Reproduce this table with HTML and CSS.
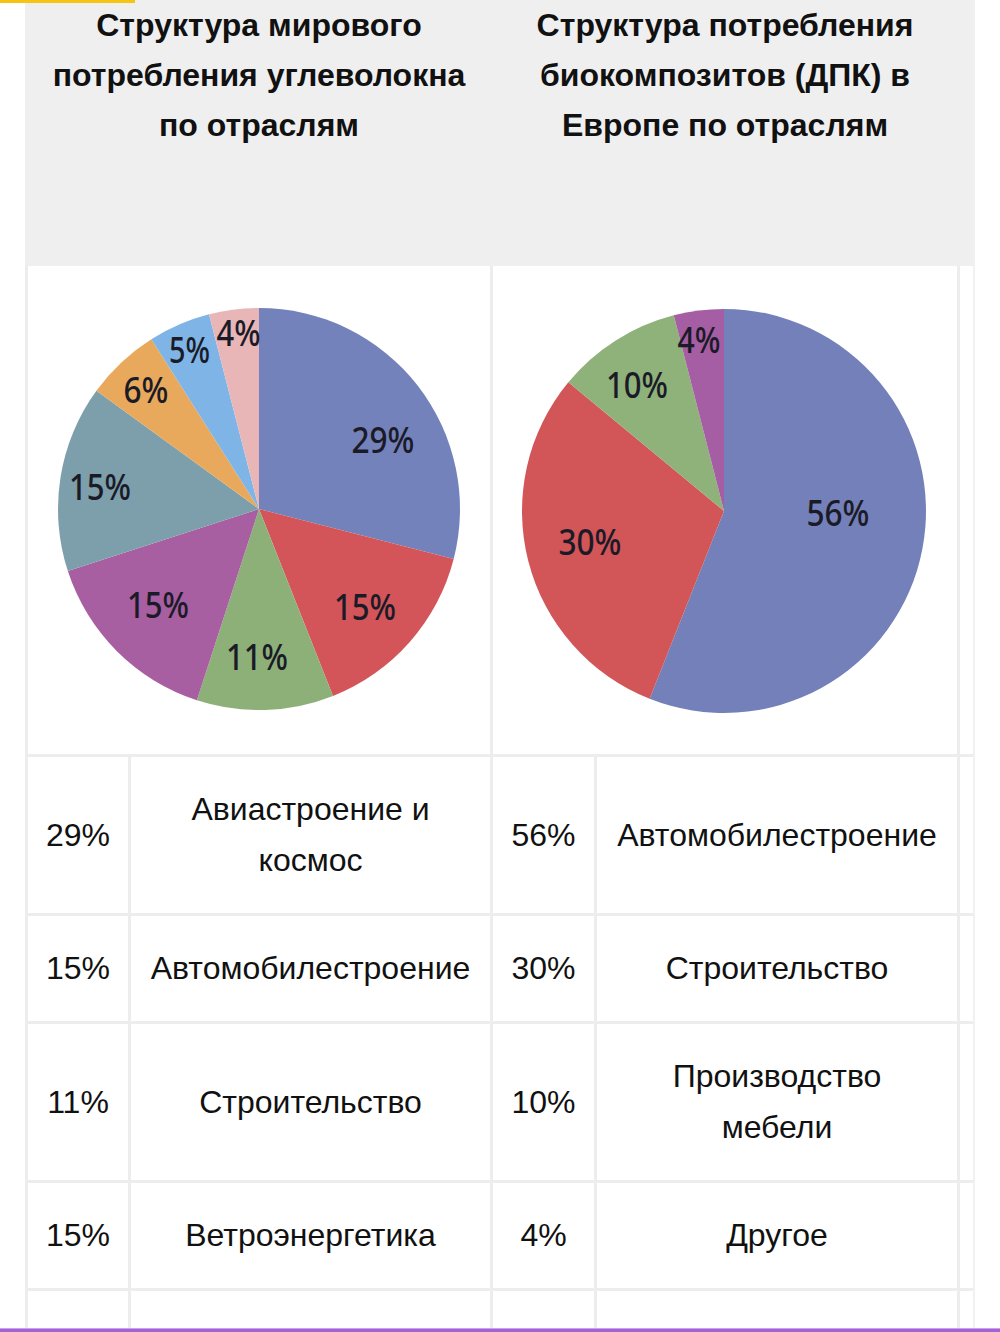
FILE: index.html
```html
<!DOCTYPE html>
<html lang="ru">
<head>
<meta charset="utf-8">
<title>Структура потребления</title>
<link rel="stylesheet" href="styles.css">
</head>
<body>
<div class="progress"></div>
<div class="page">
  <div class="viewport">
    <div class="grid">
      <div class="cell head span2 first">Структура мирового потребления углеволокна по отраслям</div>
      <div class="cell head span2">Структура потребления биокомпозитов (ДПК) в Европе по отраслям</div>
      <div class="cell head"></div>

      <div class="cell chart span2 first">
        <svg class="pie" width="420" height="420" viewBox="0 0 420 420">
          <path fill="#7482bb" d="M210,209 L210,8 A201,201 0 0 1 404.68,258.99 Z"/>
          <path fill="#d35559" d="M210,209 L404.68,258.99 A201,201 0 0 1 283.99,395.89 Z"/>
          <path fill="#8db078" d="M210,209 L283.99,395.89 A201,201 0 0 1 147.89,400.16 Z"/>
          <path fill="#a75fa2" d="M210,209 L147.89,400.16 A201,201 0 0 1 18.84,271.11 Z"/>
          <path fill="#7d9fab" d="M210,209 L18.84,271.11 A201,201 0 0 1 47.39,90.85 Z"/>
          <path fill="#e9a95c" d="M210,209 L47.39,90.85 A201,201 0 0 1 102.30,39.29 Z"/>
          <path fill="#7fb5e6" d="M210,209 L102.30,39.29 A201,201 0 0 1 160.01,14.32 Z"/>
          <path fill="#e9b6b8" d="M210,209 L160.01,14.32 A201,201 0 0 1 210,8 Z"/>
          <g class="lbl">
            <text x="302.5" y="153" textLength="63" lengthAdjust="spacingAndGlyphs">29%</text>
            <text x="285" y="320" textLength="62" lengthAdjust="spacingAndGlyphs">15%</text>
            <text x="177" y="370" textLength="62" lengthAdjust="spacingAndGlyphs">11%</text>
            <text x="78" y="318" textLength="62" lengthAdjust="spacingAndGlyphs">15%</text>
            <text x="20" y="200" textLength="62" lengthAdjust="spacingAndGlyphs">15%</text>
            <text x="74.5" y="103" textLength="45" lengthAdjust="spacingAndGlyphs">6%</text>
            <text x="120" y="63" textLength="41" lengthAdjust="spacingAndGlyphs">5%</text>
            <text x="167.5" y="46" textLength="44" lengthAdjust="spacingAndGlyphs">4%</text>
          </g>
        </svg>
      </div>
      <div class="cell chart span2">
        <svg class="pie" width="420" height="420" viewBox="0 0 420 420">
          <path fill="#7480b9" d="M209,211 L209,9 A202,202 0 1 1 134.64,398.82 Z"/>
          <path fill="#d25558" d="M209,211 L134.64,398.82 A202,202 0 0 1 53.36,82.24 Z"/>
          <path fill="#8fb27a" d="M209,211 L53.36,82.24 A202,202 0 0 1 158.76,15.35 Z"/>
          <path fill="#a55ea3" d="M209,211 L158.76,15.35 A202,202 0 0 1 209,9 Z"/>
          <g class="lbl">
            <text x="291.5" y="226" textLength="63" lengthAdjust="spacingAndGlyphs">56%</text>
            <text x="43.5" y="255" textLength="63" lengthAdjust="spacingAndGlyphs">30%</text>
            <text x="91" y="98" textLength="62" lengthAdjust="spacingAndGlyphs">10%</text>
            <text x="162.5" y="53" textLength="43" lengthAdjust="spacingAndGlyphs">4%</text>
          </g>
        </svg>
      </div>
      <div class="cell"></div>

      <div class="cell first">29%</div>
      <div class="cell">Авиастроение и космос</div>
      <div class="cell">56%</div>
      <div class="cell">Автомобилестроение</div>
      <div class="cell"></div>

      <div class="cell first">15%</div>
      <div class="cell">Автомобилестроение</div>
      <div class="cell">30%</div>
      <div class="cell">Строительство</div>
      <div class="cell"></div>

      <div class="cell first">11%</div>
      <div class="cell">Строительство</div>
      <div class="cell">10%</div>
      <div class="cell">Производство мебели</div>
      <div class="cell"></div>

      <div class="cell first">15%</div>
      <div class="cell">Ветроэнергетика</div>
      <div class="cell">4%</div>
      <div class="cell">Другое</div>
      <div class="cell"></div>

      <div class="cell first empty"></div>
      <div class="cell empty"></div>
      <div class="cell empty"></div>
      <div class="cell empty"></div>
      <div class="cell empty"></div>
    </div>
  </div>
  <div class="bottom-bar"></div>
</div>
</body>
</html>
```
FILE: styles.css
```css
html, body {
  margin: 0;
  padding: 0;
  background: #ffffff;
}

.progress {
  position: fixed;
  top: 0;
  left: 0;
  width: 135px;
  height: 3px;
  background: #f6c514;
  z-index: 2;
}

.page {
  height: 1332px;
  display: flex;
  flex-direction: column;
  overflow: hidden;
}

.viewport {
  flex: 1;
  min-height: 0;
  margin-left: 25px;
  width: 948px;
  overflow: hidden;
  border-right: 2px solid #f1f1f1;
}

.grid {
  display: grid;
  grid-template-columns: 106px 362px 104px 363px 360px;
  width: max-content;
  color: #111111;
  font-family: "Liberation Sans", Arial, sans-serif;
}

.cell {
  box-sizing: border-box;
  border-right: 3px solid #ededed;
  border-bottom: 3px solid #ededed;
  display: flex;
  align-items: center;
  justify-content: center;
  text-align: center;
  font-size: 32px;
  line-height: 51px;
  padding: 27px 17px;
}

.first {
  border-left: 3px solid #ededed;
}

.span2 {
  grid-column: span 2;
}

.head {
  height: 266px;
  background: #efefef;
  border-color: #efefef;
  align-items: flex-start;
  padding: 0 10px;
  font-weight: bold;
  line-height: 50px;
}

.chart {
  padding: 34px 0;
}

.pie {
  display: block;
}

.lbl text {
  font-family: "Noto Sans", "Open Sans", sans-serif;
  font-weight: 500;
  font-size: 37px;
  fill: #1b1b28;
}

.empty {
  min-height: 108px;
}

.bottom-bar {
  flex: 0 0 4px;
  background: #a462d6;
  border-top: 1px solid #c9a3ea;
  box-sizing: border-box;
}
```
